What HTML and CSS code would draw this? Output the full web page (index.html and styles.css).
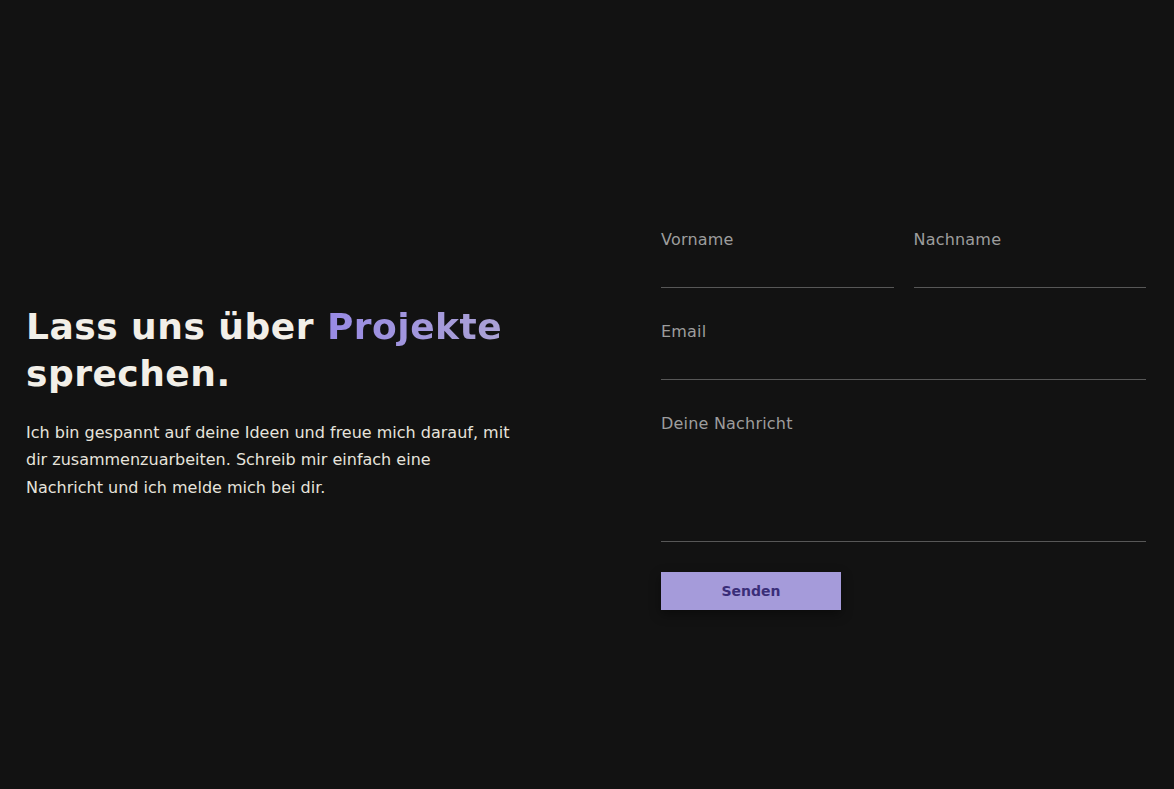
FILE: index.html
```html
<!DOCTYPE html>
<html lang="de">
<head>
<meta charset="utf-8">
<title>Kontakt</title>
<link rel="stylesheet" href="styles.css">
</head>
<body>
<section class="contact">
  <div class="intro">
    <h1 class="title">Lass uns über <span class="accent">Projekte</span> sprechen.</h1>
    <p class="text">Ich bin gespannt auf deine Ideen und freue mich darauf, mit dir zusammenzuarbeiten. Schreib mir einfach eine Nachricht und ich melde mich bei dir.</p>
  </div>
  <form class="form">
    <div class="row">
      <label class="field">
        <span class="label">Vorname</span>
        <input class="input" type="text">
      </label>
      <label class="field">
        <span class="label">Nachname</span>
        <input class="input" type="text">
      </label>
    </div>
    <label class="field">
      <span class="label">Email</span>
      <input class="input" type="email">
    </label>
    <label class="field">
      <span class="label">Deine Nachricht</span>
      <textarea class="input area"></textarea>
    </label>
    <button class="btn" type="button">Senden</button>
  </form>
</section>
</body>
</html>
```

FILE: styles.css
```css
html, body {
  margin: 0;
  padding: 0;
  background: #121212;
  height: 100%;
}
body {
  font-family: "DejaVu Sans", "Open Sans", sans-serif;
  color: #efece6;
}
.contact {
  display: grid;
  grid-template-columns: 1fr 1fr;
  column-gap: 150px;
  align-items: center;
  padding: 230px 28px 0 26px;
}
.intro {
  padding-bottom: 36px;
}
.title {
  margin: 0 0 22px;
  font-size: 36px;
  line-height: 47px;
  font-weight: 700;
  letter-spacing: 0.5px;
  color: #f2efe8;
}
.accent {
  background: linear-gradient(90deg, #988ae4, #aba2d5);
  -webkit-background-clip: text;
  background-clip: text;
  color: transparent;
}
.text {
  margin: 0;
  max-width: 484px;
  font-size: 16px;
  line-height: 27.5px;
  color: #e6e3dc;
}
.form {
  display: flex;
  flex-direction: column;
}
.row {
  display: grid;
  grid-template-columns: 1fr 1fr;
  column-gap: 20px;
}
.field {
  display: flex;
  flex-direction: column;
  margin-bottom: 34px;
}
.label {
  font-size: 16px;
  line-height: 20px;
  letter-spacing: 0.2px;
  color: #9d9d9d;
}
.input {
  background: transparent;
  border: 0;
  border-bottom: 1px solid #575757;
  height: 37px;
  padding: 0;
  outline: none;
  color: #efece6;
  font: inherit;
}
.area {
  height: 107px;
  resize: none;
}
.btn {
  align-self: flex-start;
  width: 180px;
  height: 38px;
  margin-top: -4px;
  border: 0;
  background: #a59bda;
  color: #3a2e78;
  font-family: inherit;
  font-size: 14px;
  font-weight: 700;
  box-shadow: 0 4px 12px rgba(0,0,0,0.4);
}
```
